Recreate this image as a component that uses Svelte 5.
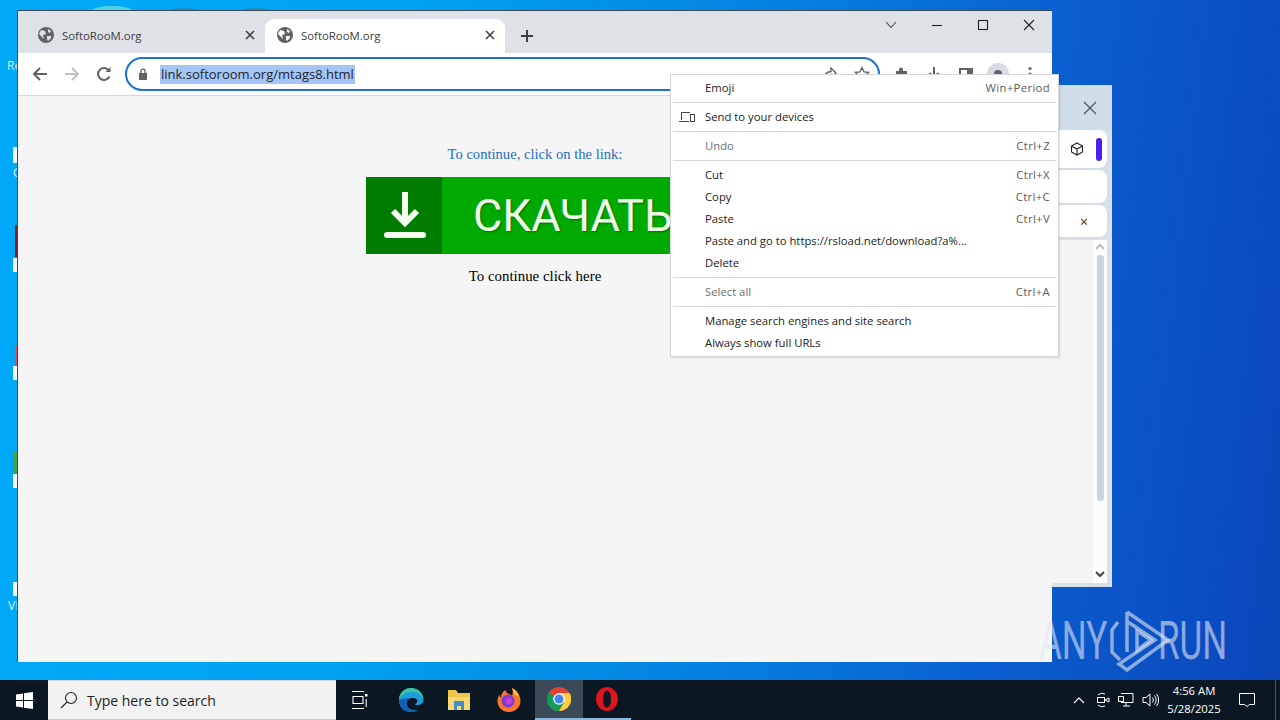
<script>
    const menu = [
        { label: 'Emoji', keys: 'Win+Period' },
        { sep: true },
        { label: 'Send to your devices', icon: true },
        { sep: true },
        { label: 'Undo', keys: 'Ctrl+Z', off: true },
        { sep: true },
        { label: 'Cut', keys: 'Ctrl+X' },
        { label: 'Copy', keys: 'Ctrl+C' },
        { label: 'Paste', keys: 'Ctrl+V' },
        { label: 'Paste and go to https://rsload.net/download?a%...' },
        { label: 'Delete' },
        { sep: true },
        { label: 'Select all', keys: 'Ctrl+A', off: true },
        { sep: true },
        { label: 'Manage search engines and site search' },
        { label: 'Always show full URLs' }
    ];

    // slivers of desktop icons that stick out left of the browser window
    const slivers = [
        { x: 13, y: 147, w: 5, h: 16, c: '#f2f6f8' },
        { x: 15, y: 225, w: 3, h: 32, c: '#8c1c1c' },
        { x: 13, y: 258, w: 5, h: 14, c: '#f2f6f8' },
        { x: 15, y: 345, w: 3, h: 20, c: '#d8505a' },
        { x: 13, y: 366, w: 5, h: 14, c: '#f2f6f8' },
        { x: 13, y: 452, w: 5, h: 22, c: '#3fa648' },
        { x: 13, y: 474, w: 5, h: 14, c: '#f2f6f8' },
        { x: 13, y: 582, w: 5, h: 14, c: '#f2f6f8' }
    ];
</script>

<div class="desktop">
    {#each slivers as s}
        <div class="sliver" style="left:{s.x}px;top:{s.y}px;width:{s.w}px;height:{s.h}px;background:{s.c}"></div>
    {/each}
    <span class="deskname" style="left:7px;top:59px">Re</span>
    <span class="deskname" style="left:13px;top:166px">C</span>
    <span class="deskname" style="left:8px;top:599px">VI</span>
    <div class="blob" style="left:92px;top:6px;width:40px"></div>
    <div class="blob dark" style="left:165px;top:8px;width:36px"></div>
    <div class="blob dark" style="left:238px;top:8px;width:36px"></div>

    <!-- window behind the browser -->
    <div class="backwin">
        <div class="backhead">
            <svg width="14" height="14" viewBox="0 0 14 14"><path d="M1 1l12 12M13 1L1 13" stroke="#4a5560" stroke-width="1.2" fill="none"/></svg>
        </div>
        <div class="backcards">
            <div class="card first">
                <svg width="14" height="14" viewBox="0 0 14 14" fill="none" stroke="#222" stroke-width="1.1"><path d="M7 1l5.5 3v6L7 13l-5.5-3V4zM1.5 4L7 7l5.5-3M7 7v6"/></svg>
                <span class="pill"></span>
            </div>
            <div class="card second"></div>
            <div class="card third">×</div>
        </div>
        <div class="backlist">
            <div class="scroll">
                <svg width="10" height="7" viewBox="0 0 10 7"><path d="M1 6l4-4 4 4" stroke="#b4c0cc" stroke-width="2" fill="none"/></svg>
                <div class="thumb"></div>
                <svg width="10" height="7" viewBox="0 0 10 7"><path d="M1 1l4 4 4-4" stroke="#444" stroke-width="2" fill="none"/></svg>
            </div>
        </div>
    </div>

    <!-- browser -->
    <div class="browser">
        <div class="tabstrip">
            <div class="tab">
                <svg class="globe" width="16" height="16" viewBox="0 0 16 16"><circle cx="8" cy="8" r="8" fill="#5f6368"/><path d="M3 3l4 1 1 3-3 1 1 4-3-3-2-2zM10 2l3 2-1 2-2-1zM9 9l4 0 0 2-3 3-1-2z" fill="#dee1e6"/></svg>
                <span class="tabname">SoftoRooM.org</span>
                <svg class="tabx" width="10" height="10" viewBox="0 0 10 10"><path d="M1 1l8 8M9 1L1 9" stroke="#3c4043" stroke-width="1.6"/></svg>
            </div>
            <div class="tab active">
                <svg class="globe" width="16" height="16" viewBox="0 0 16 16"><circle cx="8" cy="8" r="8" fill="#5f6368"/><path d="M3 3l4 1 1 3-3 1 1 4-3-3-2-2zM10 2l3 2-1 2-2-1zM9 9l4 0 0 2-3 3-1-2z" fill="#fff"/></svg>
                <span class="tabname">SoftoRooM.org</span>
                <svg class="tabx" width="10" height="10" viewBox="0 0 10 10"><path d="M1 1l8 8M9 1L1 9" stroke="#3c4043" stroke-width="1.6"/></svg>
            </div>
            <svg class="newtab" width="12" height="12" viewBox="0 0 12 12"><path d="M6 0v12M0 6h12" stroke="#3c4043" stroke-width="2"/></svg>
            <div class="winbtns">
                <svg width="12" height="8" viewBox="0 0 12 8"><path d="M1 1l5 5.5L11 1" stroke="#444" stroke-width="1.1" fill="none"/></svg>
                <svg width="12" height="12" viewBox="0 0 12 12"><path d="M1 6.5h10" stroke="#222" stroke-width="1.1"/></svg>
                <svg width="12" height="12" viewBox="0 0 12 12"><rect x="1.5" y="1.5" width="9" height="9" stroke="#222" stroke-width="1.1" fill="none"/></svg>
                <svg width="12" height="12" viewBox="0 0 12 12"><path d="M1 1l10 10M11 1L1 11" stroke="#222" stroke-width="1.1"/></svg>
            </div>
        </div>

        <div class="toolbar">
            <svg class="nav" width="16" height="16" viewBox="0 0 16 16" fill="none" stroke="#5f6368" stroke-width="2"><path d="M15 8H2M8 2L2 8l6 6"/></svg>
            <svg class="nav" width="16" height="16" viewBox="0 0 16 16" fill="none" stroke="#bcbec2" stroke-width="2"><path d="M1 8h13M8 2l6 6-6 6"/></svg>
            <svg class="nav" width="16" height="16" viewBox="0 0 16 16" fill="none" stroke="#5f6368" stroke-width="2"><path d="M13.5 10.5A6 6 0 1 1 13 4.5"/><path d="M14.5 1v5h-5z" fill="#5f6368" stroke="none"/></svg>
            <div class="omnibox">
                <svg width="10" height="12" viewBox="0 0 10 12"><path d="M1 5h8v7H1z" fill="#5f6368"/><path d="M3 5V3.2a2 2 0 0 1 4 0V5" fill="none" stroke="#5f6368" stroke-width="1.3"/></svg>
                <span class="url">link.softoroom.org/mtags8.html</span>
                <svg class="omni-end" width="16" height="16" viewBox="0 0 16 16" fill="none" stroke="#5f6368" stroke-width="1.3"><path d="M9 2l5 5-5 4V8.500C6 8.500 3.500 10 2 13c0-4 2.500-7 7-7.500z"/></svg>
                <svg width="16" height="16" viewBox="0 0 16 16" fill="none" stroke="#5f6368" stroke-width="1.3"><path d="M8 1.500l2 4.300 4.700.5-3.500 3.200 1 4.600L8 11.300l-4.200 2.800 1-4.600L1.300 6.300 6 5.800z"/></svg>
            </div>
            <div class="tools">
                <svg width="16" height="16" viewBox="0 0 16 16" fill="#5f6368"><path d="M2 5h3V3.500a2 2 0 0 1 4 0V5h4v4h1.500a2 2 0 0 1 0 4H13v2H2z"/></svg>
                <svg width="16" height="16" viewBox="0 0 16 16" fill="none" stroke="#5f6368" stroke-width="2"><path d="M8 1v10M3.500 7L8 11.500 12.500 7M2 14.500h12"/></svg>
                <svg width="16" height="16" viewBox="0 0 16 16"><path d="M1 2h14v12H1z" fill="#5f6368"/><path d="M3 4h6v8H3z" fill="#fff"/></svg>
                <div class="avatar"><span></span></div>
                <svg class="dots" width="4" height="16" viewBox="0 0 4 16" fill="#5f6368"><circle cx="2" cy="2.500" r="1.600"/><circle cx="2" cy="8" r="1.600"/><circle cx="2" cy="13.500" r="1.600"/></svg>
            </div>
        </div>

        <div class="page">
            <p class="linktext">To continue, click on the link:</p>
            <div class="banner">
                <div class="bannericon">
                    <svg width="42" height="50" viewBox="0 0 42 50" fill="none" stroke="#f4fff0" stroke-width="6"><path d="M21 1v30M9 20l12 12 12-12"/><path d="M3 44h36" stroke-linecap="round"/></svg>
                </div>
                <span class="bannertext">СКАЧАТЬ</span>
            </div>
            <p class="clicktext">To continue click here</p>
        </div>
    </div>

    <!-- context menu -->
    <div class="menu">
        {#each menu as m}
            {#if m.sep}
                <div class="sep"></div>
            {:else}
                <div class="row" class:off={m.off}>
                    {#if m.icon}
                        <svg class="rowicon" width="16" height="12" viewBox="0 0 16 12" fill="none" stroke="#444" stroke-width="1"><path d="M2.500 9V1.500H11M0 10.500h10"/><rect x="11.500" y="3.500" width="4" height="7"/></svg>
                    {/if}
                    <span>{m.label}</span>
                    {#if m.keys}<span class="keys">{m.keys}</span>{/if}
                </div>
            {/if}
        {/each}
    </div>

    <!-- watermark -->
    <div class="watermark">
        <span class="wm any">ANY</span>
        <svg width="62" height="62" viewBox="0 0 62 62" fill="none" stroke="#dfe8f4" stroke-opacity=".6" stroke-width="3.500">
            <path d="M10 12L4 20v22l8 8"/>
            <path d="M19 2v40M19 2l41 28-41 30-8-6 36-24L20 12"/>
            <path d="M29 21v19l14-10z"/>
        </svg>
        <span class="wm run">RUN</span>
    </div>

    <!-- taskbar -->
    <div class="taskbar">
        <div class="start">
            <svg width="17" height="17" viewBox="0 0 17 17" fill="#fff"><path d="M0 2.400L7 1.400v6.600H0zM8 1.200L17 0v8H8zM0 9h7v6.600L0 14.600zM8 9h9v8L8 15.800z"/></svg>
        </div>
        <div class="search">
            <svg width="18" height="18" viewBox="0 0 18 18" fill="none" stroke="#222" stroke-width="1.100"><circle cx="11" cy="7" r="5.500"/><path d="M7 11l-6 6"/></svg>
            <span>Type here to search</span>
        </div>
        <div class="taskitems">
            <div class="item">
                <svg width="16" height="18" viewBox="0 0 16 18" fill="none" stroke="#fff" stroke-width="1.100"><path d="M0 .5h12M0 17.500h12M1 5.500h10v7H1z"/><rect x="13" y="3" width="2.500" height="2.500" fill="#fff" stroke="none"/><path d="M14.200 8v8"/></svg>
            </div>
            <div class="item">
                <svg width="26" height="26" viewBox="0 0 26 26">
                    <path d="M13 1C6 1 1 6 1 13c0 7 5 12 12 12 3 0 5-1 6.500-2-5 1-11-1-11-7 0-3 3-5 6-5 4 0 5 2 5 3 0 2-2 3-3 3 2 2 9 1 9-4C25.500 6 20 1 13 1z" fill="#1d9ed9"/>
                    <path d="M1 13C1 7 6 1 13 1c7 0 12 5 12.500 12-1-5-6-8-11-8C8 5 2 8 1 13z" fill="#37c6a4"/>
                    <path d="M1 13c0 7 5 12 12 12 2 0 4-.5 5.500-1.500-5 1-10-2-10-7.500 0-2 1-4 3-5C6 11 2 13 1 13z" fill="#0f5fb4"/>
                </svg>
            </div>
            <div class="item">
                <svg width="24" height="22" viewBox="0 0 24 22"><path d="M1 1h8l2 3h12v17H1z" fill="#f0c648"/><path d="M1 8h22v13H1z" fill="#f8d775"/><rect x="7" y="12" width="10" height="9" fill="#3e8ed0"/><rect x="10" y="17" width="4" height="4" fill="#f8d775"/></svg>
            </div>
            <div class="item fox">
                <svg width="26" height="26" viewBox="0 0 26 26">
                    <path d="M13 25C6 25 1.500 20 1.500 14c0-3 1-5 2-6.500 0 1.500.5 2.500 1.500 3C5 7 7 4 10 3c-.5 2 1 3 3 4 3 1 3 2 3 2 1-3 1-5 0-8 5 2 8.500 7 8.500 13 0 6-5 11-11.500 11z" fill="#f8752a"/>
                    <path d="M16 1c4 2 6 5 7 9l-5-3c-.5-2-1-4-2-6z" fill="#ffc02e"/>
                    <circle cx="12" cy="14" r="6.500" fill="#7a3bd0"/>
                    <circle cx="13" cy="14" r="3.500" fill="#c13fd0"/>
                </svg>
            </div>
            <div class="item running active">
                <svg width="24" height="24" viewBox="0 0 24 24">
                    <circle cx="12" cy="12" r="12" fill="#db4437"/>
                    <path d="M12 12L1.600 6A12 12 0 0 0 12 24l5.200-9z" fill="#0f9d58"/>
                    <path d="M12 6h10.600A12 12 0 0 1 12 24l5.200-9z" fill="#ffcd40"/>
                    <circle cx="12" cy="12" r="5.800" fill="#fff"/>
                    <circle cx="12" cy="12" r="4.500" fill="#4285f4"/>
                </svg>
            </div>
            <div class="item running">
                <svg width="22" height="24" viewBox="0 0 22 24"><path fill-rule="evenodd" d="M11 0c6 0 11 5.400 11 12s-5 12-11 12S0 18.600 0 12 5 0 11 0zm0 3.500c-2.500 0-4 3.800-4 8.500s1.500 8.500 4 8.500 4-3.800 4-8.500-1.500-8.500-4-8.500z" fill="#e0141f"/></svg>
            </div>
        </div>
        <div class="tray">
            <svg class="chev" width="12" height="7" viewBox="0 0 12 7"><path d="M1 6l5-5 5 5" stroke="#fff" stroke-width="1.100" fill="none"/></svg>
            <svg width="14" height="16" viewBox="0 0 14 16" fill="none" stroke="#fff"><path d="M2 3A6 6 0 0 1 9 2M2 13a6 6 0 0 0 7 1"/><rect x="1.500" y="5.500" width="7" height="5"/><path d="M9 8l4-2v4z"/></svg>
            <svg width="16" height="14" viewBox="0 0 16 14" fill="none" stroke="#fff"><path d="M3 .5h12v9H3M8 9.500V13M5 13h7M.5 3.500h5v5h-5z"/></svg>
            <svg width="17" height="14" viewBox="0 0 17 14" fill="none" stroke="#fff"><path d="M1 4.500h3L8 1v12L4 9.500H1zM10.500 4.500a4 4 0 0 1 0 5M12.500 2.500a7 7 0 0 1 0 9M14.500 1a9.500 9.500 0 0 1 0 12"/></svg>
            <div class="clock"><span>4:56 AM</span><span>5/28/2025</span></div>
            <svg class="notify" width="16" height="16" viewBox="0 0 16 16" fill="none" stroke="#fff"><path d="M.5 1.500h15v11h-5l-2.500 2-2.500-2h-5z"/></svg>
        </div>
        <div class="showdesk"></div>
    </div>
</div>

<style>
    :global(body) {
        margin: 0;
        overflow: hidden;
    }

    .desktop {
        position: relative;
        width: 1280px;
        height: 720px;
        overflow: hidden;
        font-family: "Open Sans", "Noto Sans", sans-serif;
        background: linear-gradient(97deg, #00aaf8 0%, #00a2f2 30%, #0580e0 58%, #0a5fd0 78%, #0b45ba 100%);
    }

    .sliver {
        position: absolute;
    }

    .deskname {
        position: absolute;
        font-size: 12px;
        line-height: 14px;
        color: #d8f0ff;
    }

    .blob {
        position: absolute;
        height: 10px;
        border-radius: 50%;
        background: #4fd2e0;
    }

    .blob.dark {
        background: #1a8cc0;
    }

    /* window behind */
    .backwin {
        position: absolute;
        left: 1040px;
        top: 85px;
        width: 72px;
        height: 502px;
        box-sizing: border-box;
        background: #d8e0e8;
        display: flex;
        flex-direction: column;
        padding: 0 5px 4px 0;
    }

    .backhead {
        height: 45px;
        flex: none;
        display: flex;
        align-items: center;
        justify-content: flex-end;
        padding: 0 15px 0 0;
        background: #cfdde9;
        margin-right: -5px;
    }

    .backcards {
        display: flex;
        flex-direction: column;
        gap: 2px;
    }

    .card {
        background: #fff;
        border-radius: 8px;
        display: flex;
        align-items: center;
        box-shadow: 0 0 2px #d0d6dc;
    }

    .card.first {
        height: 38px;
        justify-content: flex-end;
        gap: 12px;
        padding-right: 5px;
    }

    .pill {
        width: 6px;
        height: 23px;
        border-radius: 3px;
        background: #4a1ff0;
    }

    .card.second {
        height: 33px;
    }

    .card.third {
        height: 32px;
        justify-content: flex-end;
        padding-right: 19px;
        font-size: 14px;
        color: #333;
    }

    .backlist {
        flex: 1;
        margin-top: 3px;
        background: #f4f4f5;
        display: flex;
        justify-content: flex-end;
        border-radius: 0 0 6px 0;
    }

    .scroll {
        width: 14px;
        background: #fcfcfc;
        display: flex;
        flex-direction: column;
        align-items: center;
        padding: 3px 0 5px;
        gap: 5px;
    }

    .thumb {
        width: 7px;
        height: 246px;
        border-radius: 3px;
        background: #c8d6e4;
        margin-bottom: auto;
    }

    /* browser */
    .browser {
        position: absolute;
        left: 17px;
        top: 10px;
        width: 1035px;
        height: 652px;
        box-sizing: border-box;
        border: 1px solid #3a4a58;
        border-right: 0;
        border-bottom: 0;
        display: flex;
        flex-direction: column;
        background: #f5f5f6;
    }

    .tabstrip {
        height: 42px;
        flex: none;
        background: #dee1e6;
        display: flex;
        align-items: flex-end;
        padding-left: 2px;
    }

    .tab {
        width: 245px;
        height: 34px;
        box-sizing: border-box;
        display: flex;
        align-items: center;
        padding: 0 10px 2px 18px;
        font-size: 11.4px;
        color: #3c4043;
    }

    .tab.active {
        width: 240px;
        background: #fff;
        border-radius: 9px 9px 0 0;
        padding-left: 12px;
    }

    .globe {
        flex: none;
    }

    .tabname {
        margin-left: 8px;
        flex: 1;
    }

    .newtab {
        margin: 0 0 11px 16px;
    }

    .winbtns {
        margin-left: auto;
        align-self: flex-start;
        display: flex;
        align-items: center;
        gap: 34px;
        height: 28px;
        padding-right: 17px;
    }

    .toolbar {
        height: 42px;
        flex: none;
        background: #fff;
        border-bottom: 1px solid #d8d9dc;
        display: flex;
        align-items: center;
        padding-left: 14px;
        gap: 16px;
    }

    .omnibox {
        width: 755px;
        height: 34px;
        box-sizing: border-box;
        margin-left: -3px;
        border: 2px solid #1a73cd;
        border-radius: 17px;
        display: flex;
        align-items: center;
        padding: 0 8px 0 11px;
        background: #fff;
    }

    .url {
        margin-left: 12px;
        padding: 0 1px;
        line-height: 19px;
        font-size: 13px;
        color: #1d2430;
        background: #a5c6f5;
    }

    .omni-end {
        margin-left: auto;
        margin-right: 16px;
    }

    .tools {
        display: flex;
        align-items: center;
        gap: 16px;
        margin-left: -2px;
    }

    .avatar {
        width: 22px;
        height: 22px;
        margin: 0 -3px;
        border-radius: 50%;
        background: #d8dbe4;
        display: flex;
        align-items: center;
        justify-content: center;
    }

    .avatar span {
        width: 8px;
        height: 8px;
        border-radius: 50%;
        background: #5f6368;
    }

    .dots {
        margin-left: 6px;
    }

    .page {
        flex: 1;
        display: flex;
        flex-direction: column;
        align-items: center;
        font-family: "Liberation Serif", serif;
        padding-top: 49px;
    }

    .page p {
        margin: 0;
        line-height: 18px;
    }

    .linktext {
        font-size: 14.6px;
        color: #1d6fc4;
    }

    .banner {
        width: 338px;
        height: 77px;
        margin-top: 14px;
        background: #00aa00;
        display: flex;
        align-items: center;
    }

    .bannericon {
        width: 76px;
        height: 77px;
        flex: none;
        background: #007c00;
        display: flex;
        align-items: center;
        justify-content: center;
        padding-left: 1px;
        box-sizing: border-box;
    }

    .bannertext {
        margin-left: 31px;
        font-family: Roboto, sans-serif;
        font-size: 45px;
        color: #eefce8;
        white-space: nowrap;
        text-shadow: 1px 1px 2px #007000;
    }

    .clicktext {
        margin-top: 13px !important;
        font-size: 14.9px;
        color: #000;
    }

    /* context menu */
    .menu {
        position: absolute;
        left: 670px;
        top: 74px;
        width: 389px;
        box-sizing: border-box;
        background: #fff;
        border: 1px solid #d4d5d8;
        padding: 2px 0 2px;
        font-size: 11.3px;
        color: #222;
        box-shadow: 1px 1px 2px rgba(0, 0, 0, .12);
    }

    .row {
        position: relative;
        height: 22px;
        box-sizing: border-box;
        display: flex;
        align-items: center;
        justify-content: space-between;
        padding: 0 8px 1px 34px;
        white-space: nowrap;
    }

    .row.off {
        color: #6e6e6e;
    }

    .keys {
        color: #5a5a5a;
        letter-spacing: .35px;
    }

    .rowicon {
        position: absolute;
        left: 8px;
        top: 5px;
    }

    .sep {
        height: 7px;
        box-sizing: border-box;
        padding-top: 3px;
    }

    .sep::before {
        content: "";
        display: block;
        height: 1px;
        margin: 0 2px;
        background: #d8d8da;
    }

    /* watermark */
    .watermark {
        position: absolute;
        left: 1038px;
        top: 610px;
        display: flex;
        align-items: center;
        height: 62px;
        width: 194px;
    }

    .watermark svg {
        position: absolute;
        left: 70px;
        top: 0;
    }

    .wm {
        position: absolute;
        top: 4px;
        font-family: Roboto, sans-serif;
        font-size: 53px;
        line-height: 54px;
        color: rgba(225, 232, 244, .6);
        transform: scaleX(.66);
        transform-origin: left top;
    }

    .any {
        left: 1px;
    }

    .run {
        left: 120px;
    }

    /* taskbar */
    .taskbar {
        position: absolute;
        left: 0;
        right: 0;
        bottom: 0;
        height: 40px;
        background: #0b1824;
        display: flex;
        align-items: stretch;
    }

    .start {
        width: 48px;
        display: flex;
        align-items: center;
        justify-content: center;
    }

    .search {
        width: 288px;
        box-sizing: border-box;
        background: #f2f2f2;
        border-top: 1px solid #d4d8dc;
        border-bottom: 1px solid #c4c8cc;
        display: flex;
        align-items: center;
        gap: 9px;
        padding-left: 12px;
        font-size: 14px;
        color: #222;
    }

    .taskitems {
        display: flex;
    }

    .item {
        width: 48px;
        display: flex;
        align-items: center;
        justify-content: center;
        box-sizing: border-box;
    }

    .item:nth-child(1) {
        margin-right: 3px;
    }

    .item.fox {
        margin: 0 2px;
    }

    .item.running {
        border-bottom: 2px solid #8fb8dc;
    }

    .item.active {
        background: #3a4a58;
    }

    .tray {
        margin-left: auto;
        display: flex;
        align-items: center;
        color: #fff;
        gap: 8px;
        padding-right: 25px;
    }

    .chev {
        margin-right: 3px;
    }

    .clock {
        width: 62px;
        margin-left: -4px;
        display: flex;
        flex-direction: column;
        align-items: center;
        font-size: 11.3px;
        line-height: 18px;
    }

    .notify {
        margin-left: 6px;
    }

    .showdesk {
        position: absolute;
        right: 4px;
        top: 0;
        width: 1px;
        height: 40px;
        background: #4a5560;
    }
</style>
